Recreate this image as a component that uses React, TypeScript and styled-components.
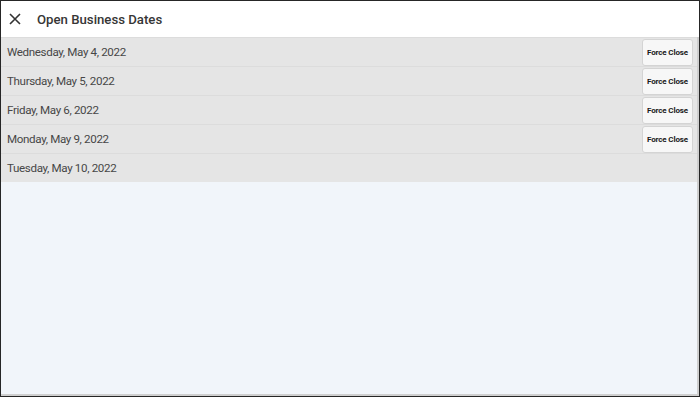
import styled, { createGlobalStyle } from 'styled-components';

const GlobalStyle = createGlobalStyle`
  html, body {
    margin: 0;
    padding: 0;
    background: #ffffff;
  }
  * {
    box-sizing: border-box;
  }
`;

const Frame = styled.div`
  width: 700px;
  height: 397px;
  border: 1px solid #262626;
  box-shadow: inset -2px -2px 0 #cfcfcf;
  background: #f1f5fa;
  display: flex;
  flex-direction: column;
  font-family: Roboto, 'Liberation Sans', sans-serif;
  overflow: hidden;
`;

const Header = styled.div`
  height: 36px;
  background: #ffffff;
  display: flex;
  align-items: center;
  padding-left: 7px;
  gap: 16px;
`;

const CloseButton = styled.button`
  width: 13px;
  height: 13px;
  padding: 0;
  border: none;
  background: none;
  display: flex;
  align-items: center;
  justify-content: center;
  cursor: pointer;
`;

const Title = styled.h1`
  margin: 0;
  font-size: 13.2px;
  font-weight: 500;
  color: #363636;
`;

const List = styled.div`
  display: flex;
  flex-direction: column;
  margin-right: 2px;
`;

const Row = styled.div`
  height: 29px;
  background: #e5e5e5;
  border-top: 1px solid #dcdcdc;
  display: flex;
  align-items: center;
  justify-content: space-between;
  padding: 0 4px 0 6px;
`;

const DateLabel = styled.span`
  font-size: 11.6px;
  letter-spacing: -0.35px;
  color: #474747;
`;

const ForceButton = styled.button`
  width: 51px;
  height: 27px;
  margin-top: 1px;
  background: #f7f7f7;
  border: 1px solid #d4d4d4;
  border-radius: 3px;
  font-family: Roboto, 'Liberation Sans', sans-serif;
  font-size: 8px;
  font-weight: 700;
  letter-spacing: -0.15px;
  color: #1a1a1a;
  padding: 0;
  cursor: pointer;
`;

const dates = [
  { label: 'Wednesday, May 4, 2022', closable: true },
  { label: 'Thursday, May 5, 2022', closable: true },
  { label: 'Friday, May 6, 2022', closable: true },
  { label: 'Monday, May 9, 2022', closable: true },
  { label: 'Tuesday, May 10, 2022', closable: false },
];

export default function App() {
  return (
    <>
      <GlobalStyle />
      <Frame>
        <Header>
          <CloseButton aria-label="close">
            <svg width="12" height="12" viewBox="0 0 12 12">
              <path d="M1 1 L11 11 M11 1 L1 11" stroke="#333" strokeWidth="1.6" />
            </svg>
          </CloseButton>
          <Title>Open Business Dates</Title>
        </Header>
        <List>
          {dates.map((d) => (
            <Row key={d.label}>
              <DateLabel>{d.label}</DateLabel>
              {d.closable && <ForceButton>Force Close</ForceButton>}
            </Row>
          ))}
        </List>
      </Frame>
    </>
  );
}
